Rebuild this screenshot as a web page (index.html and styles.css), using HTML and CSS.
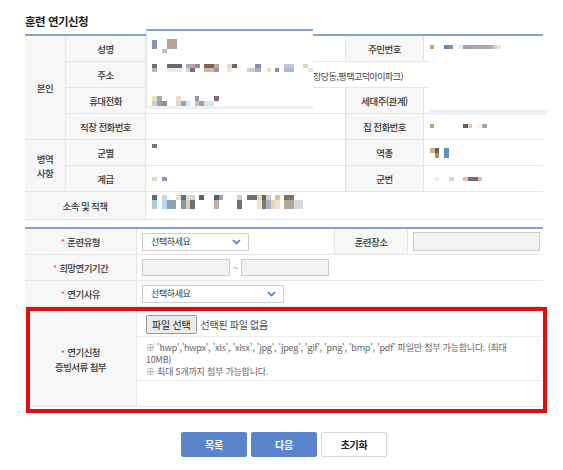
FILE: index.html
```html
<!DOCTYPE html>
<html lang="ko">
<head>
<meta charset="utf-8">
<title>훈련 연기신청</title>
<link rel="stylesheet" href="styles.css">
</head>
<body>
<div class="page">
  <h2 class="title">훈련 연기신청</h2>

  <div class="info">
    <div class="lbl grp-self">본인</div>
    <div class="lbl">성명</div>
    <div class="val"><svg class="blur" width="199" height="26"><rect x="6" y="4" width="5" height="9" fill="#8a90b8"/><rect x="21" y="3" width="10" height="10" fill="#bca09c"/><rect x="16" y="13" width="5" height="4" fill="#c4c4c4"/></svg></div>
    <div class="lbl">주민번호</div>
    <div class="val end"><svg class="blur" width="119" height="26"><rect x="6" y="9" width="4" height="4" fill="#c8a070"/><rect x="20" y="9" width="5" height="4" fill="#6888b0"/><rect x="25" y="9" width="4" height="4" fill="#909090"/><rect x="34" y="9" width="5" height="4" fill="#e0eef8"/><rect x="39" y="9" width="6" height="4" fill="#a0a0b8"/><rect x="45" y="9" width="6" height="4" fill="#b0a0b0"/><rect x="51" y="9" width="6" height="4" fill="#a0b0a8"/><rect x="57" y="9" width="6" height="4" fill="#a8a8b8"/><rect x="63" y="9" width="6" height="4" fill="#c0a8a0"/><rect x="69" y="9" width="4" height="4" fill="#e8c8b8"/><rect x="73" y="9" width="4" height="4" fill="#f8e8d8"/></svg></div>

    <div class="lbl">주소</div>
    <div class="val span3 end addr"><svg class="blur" width="167" height="26"><rect x="6" y="2" width="5" height="4" fill="#707070"/><rect x="6" y="6" width="5" height="4" fill="#b8b8b8"/><rect x="21" y="2" width="15" height="4" fill="#6f6868"/><rect x="21" y="6" width="15" height="4" fill="#ecebf0"/><rect x="40" y="2" width="4" height="4" fill="#a0b0c8"/><rect x="40" y="6" width="4" height="4" fill="#d0d8e8"/><rect x="44" y="2" width="5" height="4" fill="#c0a0a8"/><rect x="44" y="6" width="5" height="4" fill="#806870"/><rect x="49" y="2" width="5" height="4" fill="#909090"/><rect x="58" y="2" width="10" height="4" fill="#706860"/><rect x="58" y="6" width="10" height="4" fill="#d8b890"/><rect x="68" y="2" width="5" height="4" fill="#c8a0b0"/><rect x="68" y="6" width="5" height="4" fill="#9898a0"/><rect x="81" y="2" width="5" height="4" fill="#f0d8b8"/><rect x="81" y="6" width="5" height="4" fill="#f8e8d8"/><rect x="86" y="2" width="5" height="4" fill="#706070"/><rect x="101" y="6" width="8" height="4" fill="#c0d0e0"/><rect x="109" y="2" width="6" height="4" fill="#8090a8"/><rect x="109" y="6" width="6" height="4" fill="#a0b0c0"/><rect x="121" y="6" width="4" height="4" fill="#f8d8b0"/><rect x="129" y="6" width="4" height="4" fill="#909090"/><rect x="138" y="2" width="10" height="4" fill="#c0c8e0"/><rect x="138" y="6" width="10" height="4" fill="#a8b8d8"/><rect x="157" y="2" width="5" height="4" fill="#e0d0c0"/><rect x="162" y="6" width="5" height="4" fill="#d8e8f0"/></svg><span class="addr-text">장당동,평택고덕아이파크)</span></div>

    <div class="lbl">휴대전화</div>
    <div class="val"><svg class="blur" width="199" height="26"><rect x="6" y="8" width="5" height="5" fill="#f0e0b0"/><rect x="6" y="13" width="5" height="5" fill="#c0d0e0"/><rect x="11" y="8" width="5" height="5" fill="#90b0d0"/><rect x="11" y="13" width="5" height="5" fill="#a0a0a0"/><rect x="16" y="13" width="5" height="5" fill="#909090"/><rect x="30" y="8" width="5" height="5" fill="#f0e0c0"/><rect x="30" y="13" width="5" height="5" fill="#d0d8e0"/><rect x="35" y="13" width="5" height="5" fill="#a0a0a0"/><rect x="40" y="13" width="4" height="5" fill="#d0e8f8"/><rect x="49" y="8" width="4" height="5" fill="#a090c0"/><rect x="49" y="13" width="4" height="5" fill="#c0c0d0"/><rect x="53" y="13" width="5" height="5" fill="#a0a0a0"/><rect x="58" y="13" width="10" height="5" fill="#d0e8f8"/><rect x="68" y="8" width="5" height="5" fill="#806878"/></svg></div>
    <div class="lbl">세대주(관계)</div>
    <div class="val end"></div>

    <div class="lbl">직장 전화번호</div>
    <div class="val"></div>
    <div class="lbl">집 전화번호</div>
    <div class="val end"><svg class="blur" width="119" height="26"><rect x="6" y="10" width="4" height="4" fill="#c8a070"/><rect x="39" y="10" width="5" height="4" fill="#606060"/><rect x="44" y="10" width="4" height="4" fill="#e8c8b0"/><rect x="53" y="10" width="4" height="4" fill="#f8f0e0"/><rect x="58" y="10" width="5" height="4" fill="#a0a8b0"/></svg></div>

    <div class="lbl grp-mil">병역<br>사항</div>
    <div class="lbl">군별</div>
    <div class="val"><svg class="blur" width="199" height="26"><rect x="6" y="4" width="5" height="4" fill="#777777"/></svg></div>
    <div class="lbl">역종</div>
    <div class="val end"><svg class="blur" width="119" height="26"><rect x="6" y="8" width="5" height="5" fill="#d8b090"/><rect x="11" y="8" width="4" height="5" fill="#606060"/><rect x="11" y="13" width="4" height="5" fill="#a89060"/><rect x="20" y="8" width="5" height="10" fill="#5890c0"/></svg></div>

    <div class="lbl">계급</div>
    <div class="val"><svg class="blur" width="199" height="26"><rect x="6" y="11" width="5" height="4" fill="#dcdcc0"/><rect x="16" y="11" width="5" height="4" fill="#8098c0"/></svg></div>
    <div class="lbl">군번</div>
    <div class="val end"><svg class="blur" width="119" height="26"><rect x="11" y="11" width="4" height="4" fill="#f8e8d0"/><rect x="25" y="11" width="5" height="4" fill="#c8d8ec"/><rect x="39" y="11" width="5" height="4" fill="#e8c0a0"/><rect x="44" y="11" width="10" height="4" fill="#707070"/><rect x="54" y="11" width="4" height="4" fill="#d8c0a0"/></svg></div>

    <div class="lbl span2">소속 및 직책</div>
    <div class="val span3 end"><svg class="blur" width="170" height="28"><rect x="6" y="3" width="5" height="5" fill="#606870"/><rect x="6" y="8" width="5" height="9" fill="#a8cce0"/><rect x="16" y="3" width="5" height="14" fill="#b8d8f0"/><rect x="21" y="8" width="9" height="9" fill="#8ca0b8"/><rect x="30" y="3" width="5" height="5" fill="#f0e0c0"/><rect x="35" y="3" width="5" height="5" fill="#607080"/><rect x="35" y="8" width="5" height="9" fill="#8098b0"/><rect x="40" y="3" width="4" height="5" fill="#e0e0e0"/><rect x="40" y="8" width="4" height="9" fill="#e8c8a8"/><rect x="44" y="3" width="5" height="5" fill="#d0d8e0"/><rect x="44" y="8" width="5" height="9" fill="#707070"/><rect x="53" y="3" width="5" height="5" fill="#606060"/><rect x="68" y="3" width="5" height="5" fill="#506070"/><rect x="68" y="8" width="5" height="9" fill="#c0b0a8"/><rect x="73" y="3" width="4" height="5" fill="#a0a0a0"/><rect x="91" y="3" width="5" height="5" fill="#d0d0d0"/><rect x="91" y="8" width="5" height="9" fill="#707070"/><rect x="101" y="3" width="10" height="5" fill="#707070"/><rect x="111" y="3" width="5" height="5" fill="#f0d0b0"/><rect x="111" y="8" width="5" height="9" fill="#f8e0c8"/><rect x="116" y="3" width="4" height="5" fill="#706050"/><rect x="116" y="8" width="4" height="9" fill="#787878"/><rect x="120" y="3" width="5" height="5" fill="#d0d0d0"/><rect x="120" y="8" width="5" height="9" fill="#a8b0c8"/><rect x="125" y="8" width="4" height="9" fill="#f0d0b0"/><rect x="129" y="3" width="5" height="5" fill="#e0c090"/><rect x="129" y="8" width="5" height="9" fill="#f0e0d0"/><rect x="138" y="3" width="10" height="5" fill="#807060"/><rect x="138" y="8" width="10" height="9" fill="#b0a8a0"/><rect x="148" y="8" width="9" height="9" fill="#d8d8d8"/></svg></div>
  </div>

  <div class="form">
    <div class="lbl"><span class="req">*</span>훈련유형</div>
    <div class="val pad">
      <div class="select sel-short"><span>선택하세요</span><svg class="chev" width="9" height="6"><polyline points="1,1 4.5,4.5 8,1" fill="none" stroke="#3d7fd6" stroke-width="1.6"/></svg></div>
    </div>
    <div class="lbl">훈련장소</div>
    <div class="val pad end"><input class="field field-place" type="text"></div>

    <div class="lbl"><span class="req">*</span>희망연기기간</div>
    <div class="val pad span3 end">
      <input class="field field-date" type="text"><span class="tilde">~</span><input class="field field-date" type="text">
    </div>

    <div class="lbl"><span class="req">*</span>연기사유</div>
    <div class="val pad span3 end">
      <div class="select sel-long"><span>선택하세요</span><svg class="chev" width="9" height="6"><polyline points="1,1 4.5,4.5 8,1" fill="none" stroke="#3d7fd6" stroke-width="1.6"/></svg></div>
    </div>

    <div class="lbl file-lbl"><div><span class="req">*</span>연기신청<br>증빙서류 첨부</div></div>
    <div class="val span3 end file-cell">
      <div class="file-row"><span class="file-btn">파일 선택</span><span class="file-none">선택된 파일 없음</span></div>
      <div class="notes">※ 'hwp','hwpx', 'xls', 'xlsx', 'jpg', 'jpeg', 'gif', 'png', 'bmp', 'pdf' 파일만 첨부 가능합니다. (최대<br>10MB)<br>※ 최대 5개까지 첨부 가능합니다.</div>
      <div class="file-empty"></div>
    </div>
  </div>

  <div class="btns">
    <button class="btn btn-blue" type="button">목록</button>
    <button class="btn btn-blue" type="button">다음</button>
    <button class="btn btn-white" type="button">초기화</button>
  </div>

  <div class="patch patch-a"></div>
  <div class="patch patch-b"></div>
  <div class="annot"></div>
</div>
</body>
</html>
```

FILE: styles.css
```css
* { box-sizing: border-box; }

body {
  margin: 0;
  background: #fff;
  font-family: "Noto Sans CJK KR", "Noto Sans", sans-serif;
  color: #333;
}

.page {
  position: relative;
  width: 563px;
  height: 470px;
  padding: 0 20px 0 25px;
}

.title {
  margin: 0 0 5px;
  padding-top: 13px;
  font-size: 11.5px;
  line-height: 16px;
  font-weight: 700;
  letter-spacing: -0.5px;
  color: #222;
}

/* ---------- info table ---------- */
.info,
.form {
  display: grid;
  border-top: 2px solid #87a0cc;
  font-size: 9.5px;
  letter-spacing: -0.6px;
}

.info {
  grid-template-columns: 41px 80px 200px 78px 119px;
  grid-template-rows: repeat(6, 26px) 28px;
}

.lbl,
.val {
  border-bottom: 1px solid #e6e6e6;
  border-right: 1px solid #e6e6e6;
}

.lbl {
  background: #f7f7f7;
  display: flex;
  align-items: center;
  justify-content: center;
  text-align: center;
  line-height: 14px;
  font-weight: 500;
  color: #333;
}

.val {
  background: #fff;
  display: flex;
  align-items: flex-start;
}

.end { border-right: none; }

.grp-self { grid-row: span 4; }
.grp-mil { grid-row: span 2; }
.span2 { grid-column: span 2; }
.span3 { grid-column: span 3; }

.blur {
  display: block;
  position: relative;
  z-index: 2;
  flex: none;
}

.addr { align-items: stretch; }

.addr-text {
  position: relative;
  z-index: 2;
  align-self: center;
  margin-top: 3px;
  font-size: 9px;
  letter-spacing: -0.5px;
  color: #444;
}

/* ---------- form table ---------- */
.form {
  margin-top: 7px;
  grid-template-columns: 112px 198px 73px 135px;
  grid-template-rows: 26px 26px 26px 100px;
}

.req {
  color: #e04848;
  font-size: 8px;
  margin-right: 3px;
}

.pad {
  align-items: center;
  padding-left: 5px;
}

.select {
  display: flex;
  align-items: center;
  justify-content: space-between;
  height: 18px;
  padding: 0 7px 0 8px;
  background: #fff;
  border: 1px solid #cfcfcf;
  font-size: 9px;
  letter-spacing: -0.4px;
  color: #333;
}

.sel-short { width: 107px; }
.sel-long { width: 142px; }

.chev { display: block; }

.field {
  margin: 0;
  padding: 0;
  height: 18px;
  background: #f2f2f2;
  border: 1px solid #cccccc;
  font: inherit;
}

.field-place { width: 127px; height: 19px; }
.field-date { width: 88px; height: 17px; }

.tilde {
  width: 11px;
  text-align: center;
  font-size: 9px;
  color: #666;
}

.file-lbl { padding-top: 6px; }

.file-cell {
  flex-direction: column;
  align-items: stretch;
}

.file-row {
  height: 30px;
  display: flex;
  align-items: flex-start;
  padding: 8px 0 0 9px;
  border-bottom: 1px solid #ededed;
}

.file-btn {
  height: 19px;
  padding: 0 5px;
  display: flex;
  align-items: center;
  background: #ececec;
  border: 1px solid #9a9a9a;
  border-radius: 2px;
  font-size: 10px;
  letter-spacing: -0.2px;
  color: #222;
}

.file-none {
  margin-left: 4px;
  line-height: 19px;
  font-size: 10px;
  letter-spacing: -0.3px;
  color: #444;
}

.notes {
  height: 44px;
  padding: 5px 0 0 9px;
  border-bottom: 1px solid #ededed;
  font-size: 9px;
  line-height: 12px;
  letter-spacing: -0.2px;
  color: #666;
}

.file-empty { flex: 1; }

/* ---------- buttons ---------- */
.btns {
  display: flex;
  justify-content: center;
  gap: 4px;
  margin-top: 25px;
}

.btn {
  width: 66px;
  height: 25px;
  margin: 0;
  padding: 0;
  border-radius: 2px;
  font-family: inherit;
  font-size: 10px;
  font-weight: 700;
  letter-spacing: -0.3px;
}

.btn-blue {
  background: #5a85cc;
  border: 1px solid #5a85cc;
  color: #fff;
}

.btn-white {
  background: #fff;
  border: 1px solid #d6d6d6;
  color: #222;
}

/* ---------- pasted patches & annotation ---------- */
.patch {
  position: absolute;
  z-index: 1;
  background: #fff;
}

.patch-a {
  left: 146px;
  top: 29px;
  width: 167px;
  height: 80px;
  border-top: 2px solid #87a0cc;
  border-left: 1px solid #e4e4e4;
  border-bottom: 3px solid #eef0f2;
}

.patch-b {
  left: 430px;
  top: 60px;
  width: 117px;
  height: 55px;
  border-bottom: 5px solid #eef0f2;
}

.annot {
  position: absolute;
  z-index: 3;
  left: 26px;
  top: 307px;
  width: 521px;
  height: 106px;
  border: 4px solid #e20e0e;
}
```
